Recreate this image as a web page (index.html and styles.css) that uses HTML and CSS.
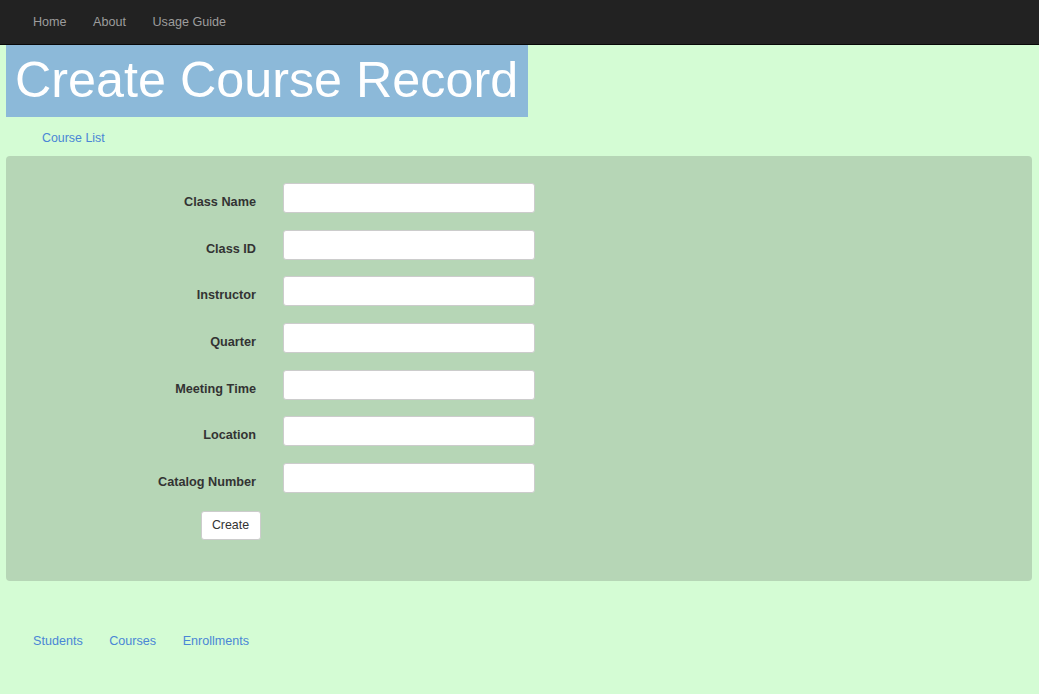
FILE: index.html
```html
<!DOCTYPE html>
<html lang="en">
<head>
<meta charset="utf-8">
<title>Create Course Record</title>
<link rel="stylesheet" href="styles.css">
</head>
<body>
<nav class="navbar">
  <a class="nav-link" href="#">Home</a>
  <a class="nav-link" href="#">About</a>
  <a class="nav-link" href="#">Usage Guide</a>
</nav>
<h1 class="page-title">Create Course Record</h1>
<div class="sub-links"><a class="link" href="#">Course List</a></div>
<div class="panel">
  <form class="form">
    <div class="row"><label class="label">Class Name</label><input class="input" type="text"></div>
    <div class="row"><label class="label">Class ID</label><input class="input" type="text"></div>
    <div class="row"><label class="label">Instructor</label><input class="input" type="text"></div>
    <div class="row"><label class="label">Quarter</label><input class="input" type="text"></div>
    <div class="row"><label class="label">Meeting Time</label><input class="input" type="text"></div>
    <div class="row"><label class="label">Location</label><input class="input" type="text"></div>
    <div class="row"><label class="label">Catalog Number</label><input class="input" type="text"></div>
    <div class="btn-row"><button class="btn" type="button">Create</button></div>
  </form>
</div>
<footer class="footer">
  <a class="link" href="#">Students</a>
  <a class="link" href="#">Courses</a>
  <a class="link" href="#">Enrollments</a>
</footer>
</body>
</html>
```

FILE: styles.css
```css
* { box-sizing: border-box; }
html, body {
  margin: 0;
  padding: 0;
  background: #d4fcd4;
  font-family: "Liberation Sans", Arial, sans-serif;
  color: #333;
}
.navbar {
  height: 45px;
  background: #222;
  border-bottom: 1px solid #080808;
  display: flex;
  align-items: center;
  gap: 26.5px;
  padding-left: 33px;
  padding-bottom: 1px;
}
.nav-link {
  color: #9d9d9d;
  font-size: 12.6px;
  text-decoration: none;
}
.page-title {
  display: inline-block;
  margin: 0 0 0 6px;
  padding: 7px 10px 10px 9px;
  background: #8cb9d9;
  color: #fff;
  font-weight: normal;
  font-size: 50.3px;
  line-height: 55px;
}
.sub-links {
  padding: 11px 0 8px 42px;
  line-height: 20px;
  font-size: 12.4px;
}
.link {
  color: #4a86d6;
  text-decoration: none;
}
.panel {
  margin: 0 7px 0 6px;
  background: #b6d6b6;
  border-radius: 4px;
  padding: 27px 0 41px 0;
}
.form {
  display: flex;
  flex-direction: column;
  gap: 16.67px;
}
.row {
  display: flex;
  align-items: flex-start;
}
.label {
  width: 250px;
  text-align: right;
  font-weight: bold;
  font-size: 12.7px;
  line-height: 20px;
  padding-top: 9px;
  color: #333;
}
.input {
  margin-left: 27px;
  width: 252px;
  height: 30px;
  border: 1px solid #ccc;
  border-radius: 3px;
  background: #fff;
  padding: 4px 8px;
  font-size: 13px;
}
.btn-row {
  padding-left: 194.5px;
  margin-top: 1px;
}
.btn {
  width: 60px;
  height: 29px;
  border: 1px solid #ccc;
  border-radius: 3px;
  background: #fff;
  color: #333;
  font-family: "Liberation Sans", Arial, sans-serif;
  font-size: 12.4px;
  padding: 0;
}
.footer {
  margin-top: 50px;
  padding-left: 33px;
  display: flex;
  gap: 26.5px;
  font-size: 12.6px;
  line-height: 20px;
}
```
